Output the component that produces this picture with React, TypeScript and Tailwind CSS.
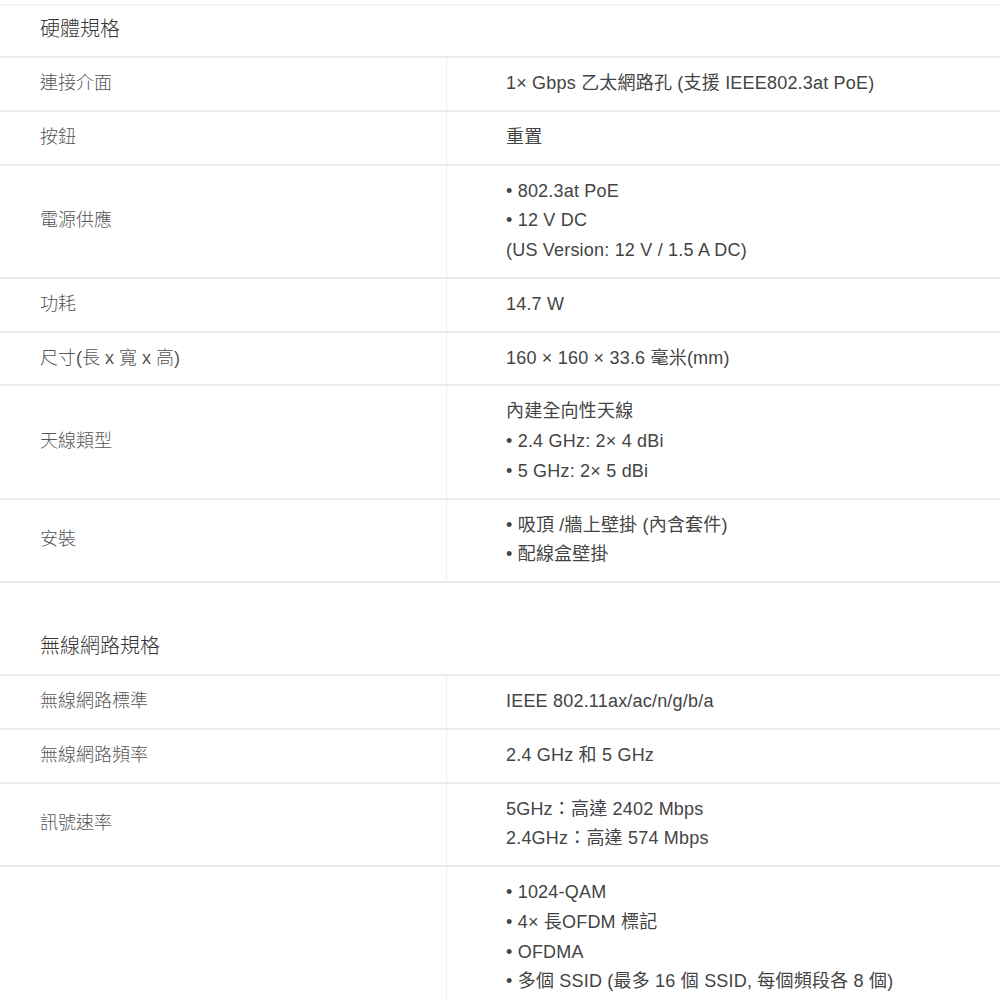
import React from "react";

type Row = { label: string; lines: string[] };

const hardware: Row[] = [
  { label: "連接介面", lines: ["1× Gbps 乙太網路孔 (支援 IEEE802.3at PoE)"] },
  { label: "按鈕", lines: ["重置"] },
  { label: "電源供應", lines: ["• 802.3at PoE", "• 12 V DC", "(US Version: 12 V / 1.5 A DC)"] },
  { label: "功耗", lines: ["14.7 W"] },
  { label: "尺寸(長 x 寬 x 高)", lines: ["160 × 160 × 33.6 毫米(mm)"] },
  { label: "天線類型", lines: ["內建全向性天線", "• 2.4 GHz: 2× 4 dBi", "• 5 GHz: 2× 5 dBi"] },
  { label: "安裝", lines: ["• 吸頂 /牆上壁掛 (內含套件)", "• 配線盒壁掛"] },
];

const wireless: Row[] = [
  { label: "無線網路標準", lines: ["IEEE 802.11ax/ac/n/g/b/a"] },
  { label: "無線網路頻率", lines: ["2.4 GHz 和 5 GHz"] },
  { label: "訊號速率", lines: ["5GHz：高達 2402 Mbps", "2.4GHz：高達 574 Mbps"] },
  {
    label: "",
    lines: ["• 1024-QAM", "• 4× 長OFDM 標記", "• OFDMA", "• 多個 SSID (最多 16 個 SSID, 每個頻段各 8 個)"],
  },
];

function SpecTable({ title, rows, top }: { title: string; rows: Row[]; top?: boolean }) {
  return (
    <section className={top ? "pt-1" : "pt-[39px]"}>
      <div
        className={
          "h-[52px] flex items-center pb-[3px] pl-10 text-[20px] text-[#333] font-light " +
          (top ? "border-t-2 border-[#f3f3f3]" : "")
        }
      >
        {title}
      </div>
      <div className="border-b-2 border-[#ebebeb]">
        {rows.map((r, i) => (
          <div key={i} className="grid grid-cols-[446px_1fr] border-t-2 border-[#ebebeb]">
            <div className="flex items-center pl-10 text-[#555] font-light">{r.label}</div>
            <div className="border-l border-[#eeeeee] pl-[59px] py-[11px] text-[#444] tracking-[0.2px]">
              {r.lines.map((l, j) => (
                <div key={j}>{l}</div>
              ))}
            </div>
          </div>
        ))}
      </div>
    </section>
  );
}

export default function App() {
  return (
    <div
      className="w-[1000px] h-[1000px] overflow-hidden bg-white text-[18px] leading-[29.75px]"
      style={{ fontFamily: '"Liberation Sans", "Noto Sans CJK TC", sans-serif' }}
    >
      <SpecTable title="硬體規格" rows={hardware} top />
      <SpecTable title="無線網路規格" rows={wireless} />
    </div>
  );
}
